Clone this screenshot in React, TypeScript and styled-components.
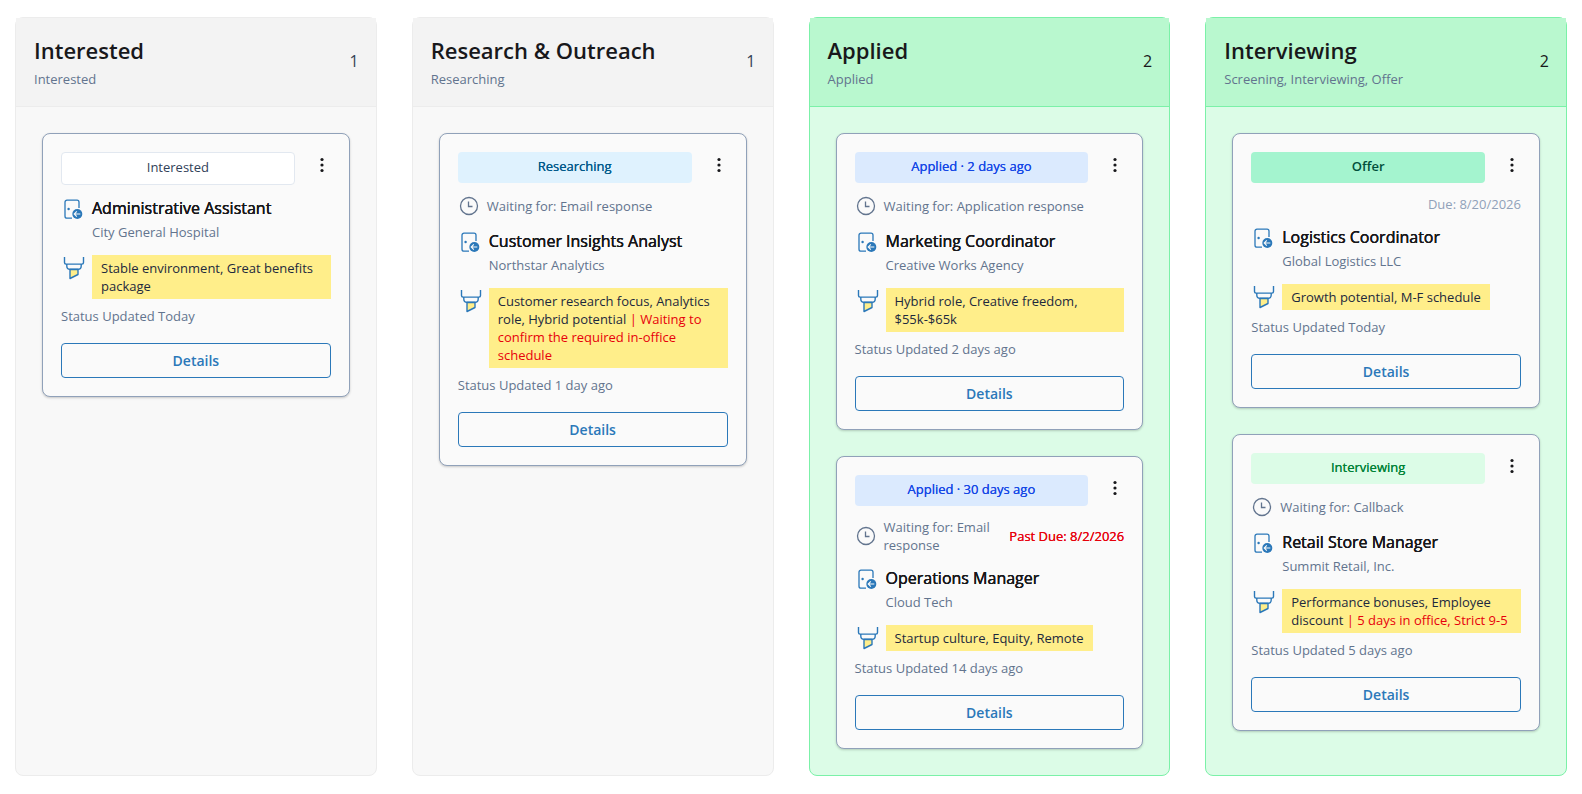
import React from "react";
import styled, { createGlobalStyle } from "styled-components";

const GlobalStyle = createGlobalStyle`
  *, *::before, *::after { box-sizing: border-box; }
  body {
    margin: 0;
    background: #ffffff;
    color: #18181b;
    font-family: "Open Sans", "Noto Sans", sans-serif;
    font-size: 13px;
    line-height: 17px;
  }
  h2, h3, p { margin: 0; }
`;

type Tone = "neutral" | "green";

const tones = {
  neutral: { border: "#ececec", header: "#f3f3f3", body: "#f8f8f8", count: "#334155" },
  green: { border: "#7bf1a8", header: "#b9f8cf", body: "#dcfce7", count: "#18181b" },
};

const badges = {
  interested: { background: "#ffffff", color: "#314158", border: "1px solid #e2e8f0" },
  researching: { background: "#dff2fe", color: "#00598a", border: "0" },
  applied: { background: "#dbeafe", color: "#1447e6", border: "0" },
  offer: { background: "#a4f4cf", color: "#004f3b", border: "0" },
  interviewing: { background: "#dcfce7", color: "#008236", border: "0" },
};

const Board = styled.main`
  display: grid;
  grid-template-columns: repeat(4, minmax(0, 1fr));
  gap: 35px;
  padding: 17px 15px 18px;
`;

const Column = styled.section<{ $tone: Tone }>`
  background: ${(p) => tones[p.$tone].body};
  border: 1px solid ${(p) => tones[p.$tone].border};
  border-radius: 8px;
`;

const ColumnHeader = styled.header<{ $tone: Tone }>`
  display: flex;
  align-items: center;
  justify-content: space-between;
  padding: 17px 17px 18px 18px;
  background: ${(p) => tones[p.$tone].header};
  border-bottom: 1px solid ${(p) => tones[p.$tone].border};
  color: ${(p) => tones[p.$tone].count};
`;

const ColumnTitle = styled.h2`
  font-size: 22px;
  line-height: 30px;
  font-weight: 600;
  color: #18181b;
`;

const ColumnStages = styled.p`
  margin-top: 6px;
  color: #62748e;
`;

const Count = styled.span`
  font-size: 16px;
  line-height: 23px;
`;

const CardList = styled.div`
  display: flex;
  flex-direction: column;
  gap: 26px;
  padding: 26px;
`;

const Card = styled.article`
  padding: 18px;
  background: #fafafa;
  border: 1px solid #90a1b9;
  border-radius: 8px;
  box-shadow: 0 1px 3px rgba(0, 0, 0, 0.1), 0 1px 2px rgba(0, 0, 0, 0.1);
`;

const CardTop = styled.div`
  display: flex;
  align-items: flex-start;
  gap: 18px;
`;

const Badge = styled.span<{ $kind: keyof typeof badges }>`
  flex: 1;
  padding: 6px 9px 8px;
  border: ${(p) => badges[p.$kind].border};
  border-radius: 4px;
  background: ${(p) => badges[p.$kind].background};
  color: ${(p) => badges[p.$kind].color};
  font-weight: ${(p) => (p.$kind === "offer" ? 600 : 500)};
  text-shadow: ${(p) => (p.$kind === "interested" || p.$kind === "offer" ? "none" : "0 0 0 currentColor")};
  text-align: center;
`;

const MenuButton = styled.button`
  display: flex;
  width: 18px;
  padding: 4px 0;
  border: 0;
  background: none;
  color: #18181b;
  cursor: pointer;
`;

const WaitingRow = styled.div`
  display: flex;
  align-items: center;
  justify-content: space-between;
  gap: 12px;
  margin-top: 12px;
  padding-bottom: 1px;
  line-height: 18px;
  color: #62748e;
`;

const Waiting = styled.div`
  display: flex;
  align-items: center;
  gap: 7px;
`;

const Due = styled.span<{ $past?: boolean }>`
  margin-left: auto;
  white-space: nowrap;
  color: ${(p) => (p.$past ? "#e7000b" : "#90a1b9")};
  font-weight: ${(p) => (p.$past ? 500 : 400)};
  text-shadow: ${(p) => (p.$past ? "0 0 0 currentColor" : "none")};
`;

const IconRow = styled.div<{ $gap: number }>`
  display: flex;
  align-items: flex-start;
  gap: 7px;
  margin-top: ${(p) => p.$gap}px;
`;

const JobTitle = styled.h3`
  font-size: 16px;
  line-height: 22px;
  font-weight: 500;
  text-shadow: 0 0 0 currentColor, 0 0 0 currentColor;
`;

const Company = styled.p`
  margin-top: 5px;
  color: #62748e;
`;

const Highlight = styled.p`
  padding: 4px 9px;
  background: #ffee8a;
  color: #1d293d;
  line-height: 18px;
`;

const Concern = styled.span`
  color: #e7000b;
`;

const Updated = styled.p`
  margin-top: 9px;
  color: #62748e;
`;

const DetailsButton = styled.button`
  display: block;
  width: 100%;
  height: 35px;
  margin-top: 18px;
  padding: 0;
  border: 1px solid #2b78b9;
  border-radius: 4px;
  background: transparent;
  color: #2b78b9;
  font: 600 14px/20px "Open Sans", "Noto Sans", sans-serif;
  cursor: pointer;
`;

const Icon = styled.svg`
  display: block;
  flex: none;
`;

const DotsIcon = () => (
  <Icon width="18" height="18" viewBox="0 0 18 18" fill="currentColor" aria-hidden="true">
    <circle cx="9" cy="3.5" r="1.6" />
    <circle cx="9" cy="9" r="1.6" />
    <circle cx="9" cy="14.5" r="1.6" />
  </Icon>
);

const ClockIcon = () => (
  <Icon width="22" height="22" viewBox="0 0 22 22" fill="none" stroke="#62748e" strokeWidth="1.3" aria-hidden="true">
    <circle cx="11" cy="11" r="8.5" />
    <path d="M10.5 6.5v5h4" />
  </Icon>
);

const DoorIcon = () => (
  <Icon width="24" height="24" viewBox="0 0 24 24" fill="none" stroke="#2b78b9" aria-hidden="true">
    <path d="M18 11V5.2a2 2 0 0 0-2-2H6a2 2 0 0 0-2 2v14a2 2 0 0 0 2 2h5" strokeWidth="1.3" />
    <circle cx="7.6" cy="12" r="1.2" fill="#2b78b9" stroke="none" />
    <circle cx="16.3" cy="17" r="5" fill="#2b78b9" stroke="none" />
    <path d="M19.3 17h-6M15.8 14.4 13.2 17l2.6 2.6" stroke="#fafafa" strokeWidth="1.1" />
  </Icon>
);

const HighlighterIcon = () => (
  <Icon width="24" height="26" viewBox="0 0 24 26" fill="none" stroke="#2b78b9" strokeWidth="1.4" strokeLinejoin="round" aria-hidden="true">
    <path d="M9 14.5h8v5l-8 4z" fill="#ffee8a" />
    <path d="M3.5 2v5.6c0 1 .6 1.5 1.5 1.5h16c.9 0 1.5-.5 1.5-1.5V2" />
    <path d="M5.8 9.1v1.8c0 2.1 1.4 3.3 3.2 3.3h8c1.8 0 3.2-1.2 3.2-3.3V9.1" />
  </Icon>
);

interface Job {
  kind: keyof typeof badges;
  badge: string;
  waiting?: string;
  due?: string;
  past?: boolean;
  title: string;
  company: string;
  pros: string;
  cons?: string;
  updated: string;
}

interface Stage {
  title: string;
  stages: string;
  tone: Tone;
  jobs: Job[];
}

const board: Stage[] = [
  {
    title: "Interested",
    stages: "Interested",
    tone: "neutral",
    jobs: [
      {
        kind: "interested",
        badge: "Interested",
        title: "Administrative Assistant",
        company: "City General Hospital",
        pros: "Stable environment, Great benefits package",
        updated: "Today",
      },
    ],
  },
  {
    title: "Research & Outreach",
    stages: "Researching",
    tone: "neutral",
    jobs: [
      {
        kind: "researching",
        badge: "Researching",
        waiting: "Email response",
        title: "Customer Insights Analyst",
        company: "Northstar Analytics",
        pros: "Customer research focus, Analytics role, Hybrid potential",
        cons: "Waiting to confirm the required in-office schedule",
        updated: "1 day ago",
      },
    ],
  },
  {
    title: "Applied",
    stages: "Applied",
    tone: "green",
    jobs: [
      {
        kind: "applied",
        badge: "Applied · 2 days ago",
        waiting: "Application response",
        title: "Marketing Coordinator",
        company: "Creative Works Agency",
        pros: "Hybrid role, Creative freedom, $55k-$65k",
        updated: "2 days ago",
      },
      {
        kind: "applied",
        badge: "Applied · 30 days ago",
        waiting: "Email response",
        due: "Past Due: 8/2/2026",
        past: true,
        title: "Operations Manager",
        company: "Cloud Tech",
        pros: "Startup culture, Equity, Remote",
        updated: "14 days ago",
      },
    ],
  },
  {
    title: "Interviewing",
    stages: "Screening, Interviewing, Offer",
    tone: "green",
    jobs: [
      {
        kind: "offer",
        badge: "Offer",
        due: "Due: 8/20/2026",
        title: "Logistics Coordinator",
        company: "Global Logistics LLC",
        pros: "Growth potential, M-F schedule",
        updated: "Today",
      },
      {
        kind: "interviewing",
        badge: "Interviewing",
        waiting: "Callback",
        title: "Retail Store Manager",
        company: "Summit Retail, Inc.",
        pros: "Performance bonuses, Employee discount",
        cons: "5 days in office, Strict 9-5",
        updated: "5 days ago",
      },
    ],
  },
];

const JobCard = ({ job }: { job: Job }) => (
  <Card>
    <CardTop>
      <Badge $kind={job.kind}>{job.badge}</Badge>
      <MenuButton type="button" aria-label={`Options for ${job.title}`}>
        <DotsIcon />
      </MenuButton>
    </CardTop>
    {(job.waiting || job.due) && (
      <WaitingRow>
        {job.waiting && (
          <Waiting>
            <ClockIcon />
            <span>{`Waiting for: ${job.waiting}`}</span>
          </Waiting>
        )}
        {job.due && <Due $past={job.past}>{job.due}</Due>}
      </WaitingRow>
    )}
    <IconRow $gap={12}>
      <DoorIcon />
      <div>
        <JobTitle>{job.title}</JobTitle>
        <Company>{job.company}</Company>
      </div>
    </IconRow>
    <IconRow $gap={14}>
      <HighlighterIcon />
      <Highlight>
        {job.pros}
        {job.cons && <Concern>{` | ${job.cons}`}</Concern>}
      </Highlight>
    </IconRow>
    <Updated>{`Status Updated ${job.updated}`}</Updated>
    <DetailsButton type="button">Details</DetailsButton>
  </Card>
);

export default function App() {
  return (
    <>
      <GlobalStyle />
      <Board>
        {board.map((stage) => (
          <Column key={stage.title} $tone={stage.tone}>
            <ColumnHeader $tone={stage.tone}>
              <div>
                <ColumnTitle>{stage.title}</ColumnTitle>
                <ColumnStages>{stage.stages}</ColumnStages>
              </div>
              <Count>{stage.jobs.length}</Count>
            </ColumnHeader>
            <CardList>
              {stage.jobs.map((job) => (
                <JobCard key={job.title} job={job} />
              ))}
            </CardList>
          </Column>
        ))}
      </Board>
    </>
  );
}
